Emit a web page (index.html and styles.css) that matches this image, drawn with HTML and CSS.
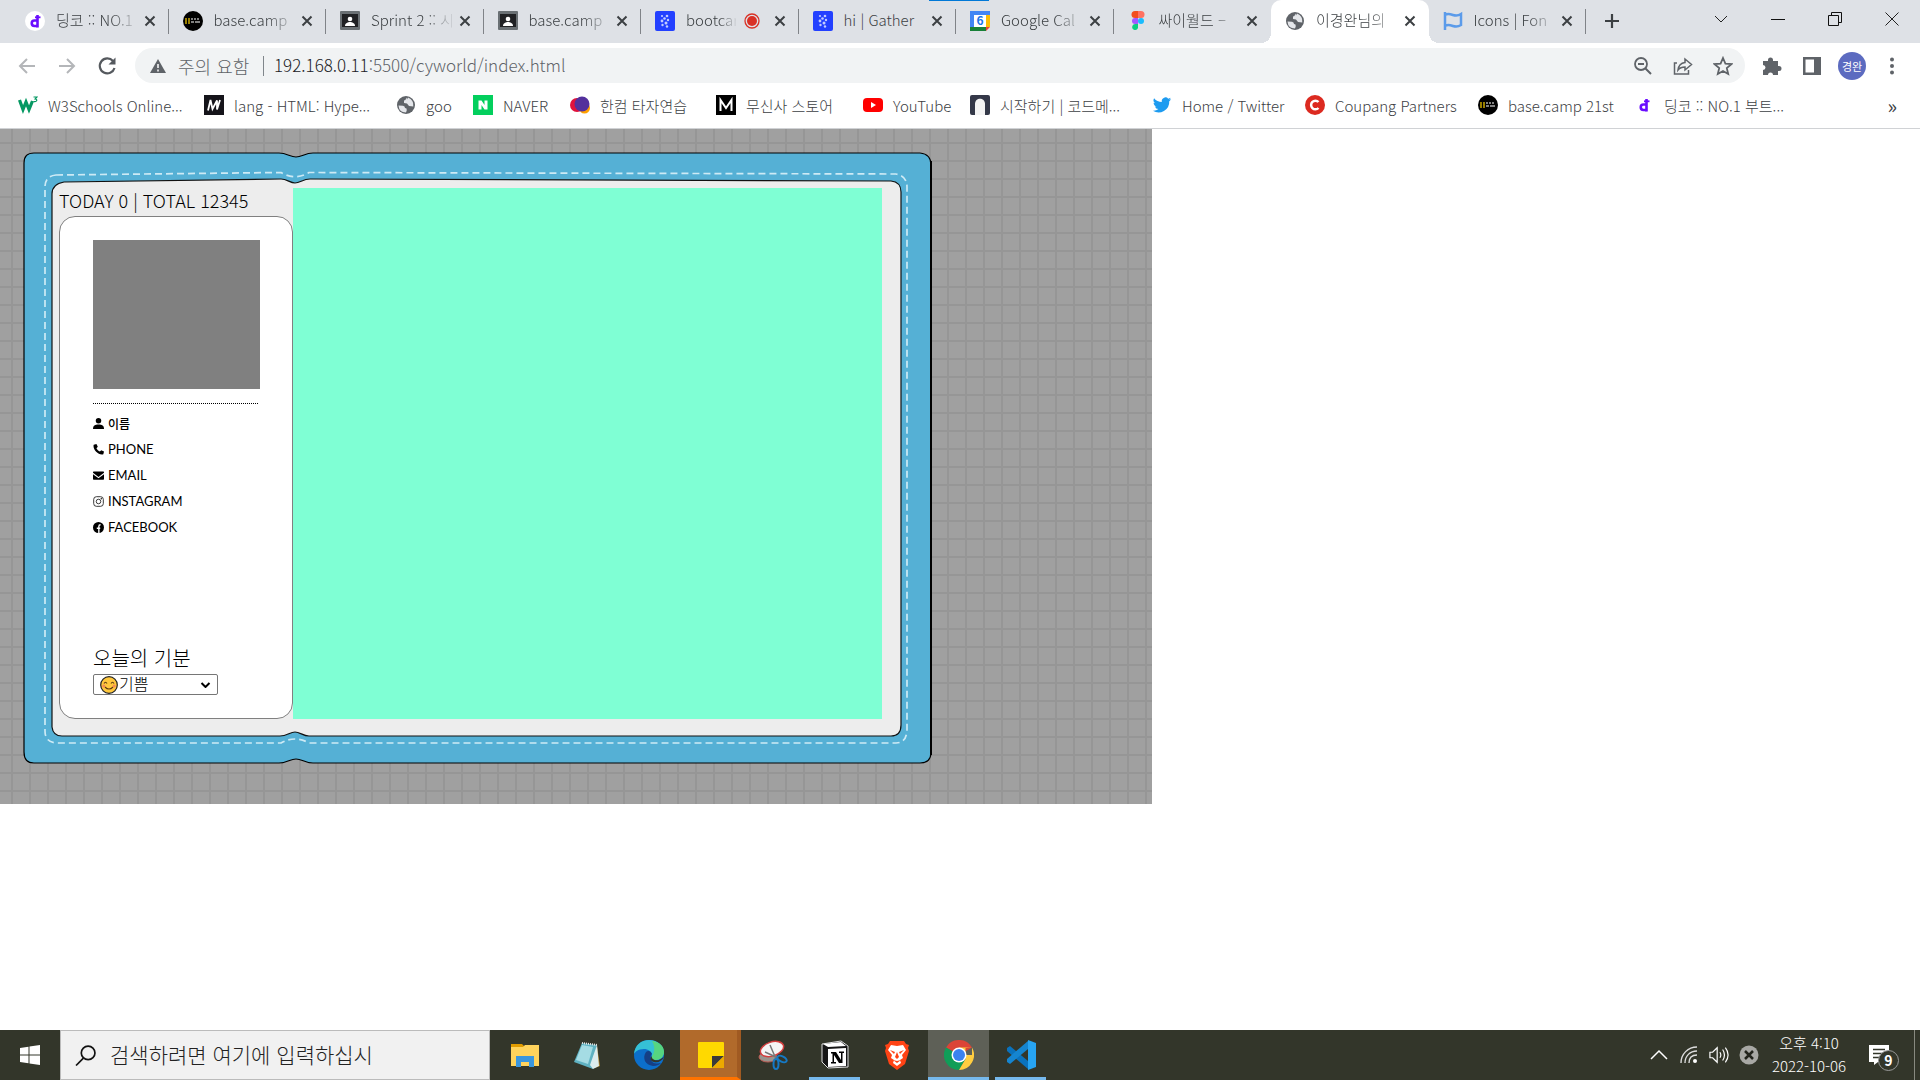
FILE: index.html
```html
<!DOCTYPE html>
<html lang="ko">
<head>
  <meta charset="UTF-8">
  <title>이경완님의 미니홈피</title>
  <link rel="stylesheet" href="styles.css">
</head>
<body>
  <!-- 공용 아이콘 -->
  <svg class="defs" width="0" height="0">
    <symbol id="i-dingco" viewBox="0 0 20 20"><path d="M12.500 4v12.500" stroke="#6a0dff" stroke-width="2.600"/><path d="M12.500 9.500H9.500a2.700 2.700 0 0 0 0 5.500h3" fill="none" stroke="#6a0dff" stroke-width="2.600"/><path d="M10 6.300h5.500" stroke="#6a0dff" stroke-width="1.800"/></symbol>
    <symbol id="i-camp" viewBox="0 0 20 20"><circle cx="10" cy="10" r="10" fill="#000"/><path d="M3 7v6M6 7v6" stroke="#c9a800" stroke-width="1.500"/><path d="M8 8h2M11 8h2M14 8h2M8 11h3M12 11h5" stroke="#aaa" stroke-width="1.500"/></symbol>
    <symbol id="i-class" viewBox="0 0 20 20"><rect width="20" height="19" rx="1" fill="#6a7074"/><rect x="2" y="3" width="16" height="13" fill="#202124"/><circle cx="10" cy="8" r="2.300" fill="#fff"/><path d="M5 15c0-3 3-4 5-4s5 1 5 4z" fill="#fff"/></symbol>
    <symbol id="i-gather" viewBox="0 0 20 20"><rect width="20" height="20" rx="2" fill="#2340ff"/><g fill="#c3ccff"><circle cx="7" cy="5" r="1.100"/><circle cx="12" cy="5" r="1.300"/><circle cx="9.500" cy="7.500" r="1.300"/><circle cx="13" cy="9" r="1.200"/><circle cx="7" cy="10" r="1.400"/><circle cx="11" cy="12" r="1.500"/><circle cx="7.500" cy="14" r="1.200"/><circle cx="12" cy="15.500" r="1.200"/></g></symbol>
    <symbol id="i-globe" viewBox="0 0 20 20"><circle cx="10" cy="10" r="9" fill="#5f6368"/><path d="M2.500 10.500l4.500.3q2 .3 2 2.200l1.500.5q.8 1.500-.5 4Q3 17.500 2.500 10.500zM10.500 2.500q-.5 2.500-2.500 3L8 8l3 .5 2 2.500 4.300.5Q18 5 12 2.600l-1 2z" fill="#e4e6ea"/></symbol>
    <symbol id="i-x" viewBox="0 0 12 12"><path d="M1.500 1.500l9 9M10.500 1.500l-9 9" stroke="#3c4043" stroke-width="2"/></symbol>
  </svg>

  <header class="browser">
    <div class="tabbar">
      <nav class="tabs">
        <div class="tab"><svg class="fav" viewBox="0 0 20 20"><circle cx="10" cy="10" r="10" fill="#fff"/><use href="#i-dingco"/></svg><a href="#">딩코 :: NO.1</a><button aria-label="닫기"><svg><use href="#i-x"/></svg></button></div>
        <div class="tab"><svg class="fav"><use href="#i-camp"/></svg><a href="#">base.camp</a><button aria-label="닫기"><svg><use href="#i-x"/></svg></button></div>
        <div class="tab"><svg class="fav"><use href="#i-class"/></svg><a href="#">Sprint 2 :: 시</a><button aria-label="닫기"><svg><use href="#i-x"/></svg></button></div>
        <div class="tab"><svg class="fav"><use href="#i-class"/></svg><a href="#">base.camp</a><button aria-label="닫기"><svg><use href="#i-x"/></svg></button></div>
        <div class="tab"><svg class="fav"><use href="#i-gather"/></svg><a href="#">bootcar</a><svg class="rec" viewBox="0 0 16 16"><circle cx="8" cy="8" r="7" fill="none" stroke="#d93025" stroke-width="1.300"/><circle cx="8" cy="8" r="5" fill="#d93025"/></svg><button aria-label="닫기"><svg><use href="#i-x"/></svg></button></div>
        <div class="tab"><svg class="fav"><use href="#i-gather"/></svg><a class="whole" href="#">hi | Gather</a><button aria-label="닫기"><svg><use href="#i-x"/></svg></button></div>
        <div class="tab"><svg class="fav" viewBox="0 0 20 20"><path d="M0 0h20v4H0z" fill="#4285f4"/><path d="M0 4h4v12H0z" fill="#4285f4"/><path d="M16 4h4v12h-4z" fill="#fbbc04"/><path d="M0 16h16v4H0z" fill="#188038"/><path d="M16 16h4l-4 4z" fill="#ea4335"/><path d="M4 4h12v12H4z" fill="#fff"/><text x="10" y="14" text-anchor="middle" font-size="12" font-weight="700" fill="#1a73e8">6</text></svg><a href="#">Google Cal</a><button aria-label="닫기"><svg><use href="#i-x"/></svg></button></div>
        <div class="tab no-line"><svg class="fav" viewBox="0 0 20 20"><path d="M7 0h3v7H7a3.500 3.500 0 0 1 0-7z" fill="#f24e1e"/><path d="M10 0h3a3.500 3.500 0 0 1 0 7h-3z" fill="#ff7262"/><path d="M7 7h3v6H7a3 3 0 0 1 0-6z" fill="#a259ff"/><circle cx="13" cy="10" r="3" fill="#1abcfe"/><path d="M7 13h3v4a3 3 0 1 1-3-4z" fill="#0acf83"/></svg><a href="#">싸이월드 –</a><button aria-label="닫기"><svg><use href="#i-x"/></svg></button></div>
        <div class="tab active"><svg class="fav"><use href="#i-globe"/></svg><a href="#">이경완님의</a><button aria-label="닫기"><svg><use href="#i-x"/></svg></button></div>
        <div class="tab"><svg class="fav" viewBox="0 0 20 20"><path d="M2 1v18M2 4c3-2 5-1 8 0s5 1 8-1v11c-3 2-5 2-8 1s-5-2-8 0" fill="none" stroke="#5b9bea" stroke-width="2.500"/></svg><a href="#">Icons | Fon</a><button aria-label="닫기"><svg><use href="#i-x"/></svg></button></div>
      </nav>
      <button class="new-tab" aria-label="새 탭"><svg viewBox="0 0 16 16"><path d="M8 1v14M1 8h14" stroke="#3c4043" stroke-width="2.200"/></svg></button>
      <div class="win">
        <button aria-label="탭 검색"><svg viewBox="0 0 14 14"><path d="M1 4l6 6 6-6" fill="none" stroke="#222"/></svg></button>
        <button aria-label="최소화"><svg viewBox="0 0 14 14"><path d="M0 7.500h14" stroke="#111"/></svg></button>
        <button aria-label="복원"><svg viewBox="0 0 14 14"><path d="M.5 3.500h10v10H.5zM3.500 3V.5h10v10H11" fill="none" stroke="#111"/></svg></button>
        <button aria-label="창 닫기"><svg viewBox="0 0 14 14"><path d="M.5.5l13 13M13.500.5l-13 13" stroke="#222"/></svg></button>
      </div>
      <div class="drag-hint"></div>
    </div>

    <div class="toolbar">
      <button aria-label="뒤로"><svg viewBox="0 0 20 20"><path d="M18 10H3M10 3l-7 7 7 7" fill="none" stroke="#b4b6b9" stroke-width="2"/></svg></button>
      <button aria-label="앞으로"><svg viewBox="0 0 20 20"><path d="M2 10h15M10 3l7 7-7 7" fill="none" stroke="#b4b6b9" stroke-width="2"/></svg></button>
      <button aria-label="새로고침"><svg viewBox="0 0 20 20"><path d="M16 5a7.500 7.500 0 1 0 1.500 7" fill="none" stroke="#55595e" stroke-width="2.200"/><path d="M18.500 1.500v7h-7z" fill="#55595e"/></svg></button>
      <div class="address">
        <svg class="warn" viewBox="0 0 16 16"><path d="M8 1l8 14H0z" fill="#5f6368"/><path d="M8 6v4M8 11.500v2" stroke="#fff" stroke-width="1.500"/></svg>
        <span class="secure">주의 요함</span>
        <p class="url"><b>192.168.0.11</b>:5500/cyworld/index.html</p>
        <button aria-label="축소"><svg viewBox="0 0 20 20"><circle cx="8" cy="8" r="6" fill="none" stroke="#5f6368" stroke-width="1.800"/><path d="M12.500 12.500L18 18M5 8h6" stroke="#5f6368" stroke-width="2"/></svg></button>
        <button aria-label="공유"><svg viewBox="0 0 20 20"><path d="M4 7H1.500v11h14v-4M12 3l6.500 5.500L12 14v-3c-3 0-5 .5-7 3 .5-4 3-7 7-7.500z" fill="none" stroke="#5f6368" stroke-width="1.500"/></svg></button>
        <button aria-label="북마크"><svg viewBox="0 0 20 20"><path d="M10 2l2.400 5.600 6 .5-4.600 4 1.400 5.900L10 15l-5.200 3 1.400-5.900-4.600-4 6-.5z" fill="none" stroke="#5f6368" stroke-width="1.800"/></svg></button>
      </div>
      <button aria-label="확장 프로그램"><svg viewBox="0 0 20 20"><path d="M1 5h5V4a2.500 2.500 0 0 1 5 0v1h5v5h1a2.500 2.500 0 0 1 0 5h-1v4h-5a2.500 2.500 0 0 0-5 0H1v-5a2.500 2.500 0 0 0 0-5z" fill="#5f6368"/></svg></button>
      <button aria-label="측면 패널"><svg viewBox="0 0 20 20"><path d="M1 1h18v18H1zM3.500 3.500v13H12v-13z" fill="#5f6368" fill-rule="evenodd"/></svg></button>
      <button class="avatar">경완</button>
      <button aria-label="메뉴"><svg viewBox="0 0 20 20"><g fill="#5f6368"><circle cx="10" cy="3.500" r="2"/><circle cx="10" cy="10" r="2"/><circle cx="10" cy="16.500" r="2"/></g></svg></button>
    </div>

    <nav class="bookmarks">
      <a href="#"><svg class="fav" viewBox="0 0 20 20"><path d="M1.500 5L5 14.500 8 7l3 7.500L14.500 6" fill="none" stroke="#059862" stroke-width="3.200"/><path d="M15.500 2h3.500l-1.800 2c2.500 0 2 3.500-1.700 2.500" fill="none" stroke="#059862" stroke-width="1.200"/></svg>W3Schools Online...</a>
      <a href="#"><svg class="fav" viewBox="0 0 20 20"><path d="M0 0h20v20H0z" fill="#15141a"/><path d="M4 15.500L6.500 5l2 9L13 5.500v9L16 5" fill="none" stroke="#fff" stroke-width="1.800"/></svg>lang - HTML: Hype...</a>
      <a href="#"><svg class="fav"><use href="#i-globe"/></svg>goo</a>
      <a href="#"><svg class="fav" viewBox="0 0 20 20"><path d="M0 0h20v20H0z" fill="#03cf5d"/><path d="M5.500 5.500h3l3 4.500V5.500h3v9h-3l-3-4.500v4.500h-3z" fill="#fff"/></svg>NAVER</a>
      <a href="#"><svg class="fav" viewBox="0 0 20 20"><circle cx="7" cy="10" r="7" fill="#e0123c"/><circle cx="14.500" cy="13" r="5.500" fill="#ffa000"/><circle cx="12" cy="9" r="7.500" fill="#53309c"/></svg>한컴 타자연습</a>
      <a href="#"><svg class="fav" viewBox="0 0 20 20"><path d="M0 0h20v20H0z"/><path d="M4.500 16V5l5.500 8 5.500-8v11" fill="none" stroke="#fff" stroke-width="2"/></svg>무신사 스토어</a>
      <a href="#"><svg class="fav" viewBox="0 0 20 20"><rect y="3" width="20" height="14" rx="4" fill="#f00"/><path d="M8 7l5 3-5 3z" fill="#fff"/></svg>YouTube</a>
      <a href="#"><svg class="fav" viewBox="0 0 20 20"><rect width="20" height="20" rx="2" fill="#343848"/><path d="M5 20V9c0-7 10-7 10 0v11z" fill="#f4f4f4"/></svg>시작하기 | 코드메...</a>
      <a href="#"><svg class="fav" viewBox="0 0 24 24"><path d="M23 5.100a9 9 0 0 1-2.600.7 4.500 4.500 0 0 0 2-2.500 9 9 0 0 1-2.900 1.100 4.500 4.500 0 0 0-7.700 4.100A12.800 12.800 0 0 1 2.500 3.800a4.500 4.500 0 0 0 1.400 6 4.500 4.500 0 0 1-2-.6c0 2.200 1.500 4.100 3.600 4.500a4.500 4.500 0 0 1-2 .1 4.500 4.500 0 0 0 4.200 3.100A9 9 0 0 1 1 18.800 12.800 12.800 0 0 0 20.700 7.400 9 9 0 0 0 23 5.100z" fill="#1d9bf0"/></svg>Home / Twitter</a>
      <a href="#"><svg class="fav" viewBox="0 0 20 20"><circle cx="10" cy="10" r="10" fill="#dc2a20"/><path d="M13.500 7a4.300 4.300 0 1 0 0 6" fill="none" stroke="#fff" stroke-width="2.500"/></svg>Coupang Partners</a>
      <a href="#"><svg class="fav"><use href="#i-camp"/></svg>base.camp 21st</a>
      <a href="#"><svg class="fav"><use href="#i-dingco"/></svg>딩코 :: NO.1 부트...</a>
      <a class="more" href="#">»</a>
    </nav>
  </header>

  <main>
    <div class="wallpaper">
      <div class="book">
        <svg class="cover" viewBox="0 0 910 612" preserveAspectRatio="none">
          <path d="M11 1H256C264 1 267 5 273 5S282 1 290 1H897Q908 2 908 13V600Q908 611 897 611H290C282 611 279 607 273 607S264 611 256 611H11Q1 611 1 600V11Q1 1 11 1z" fill="#55b0d5" stroke="#000" stroke-width="1.200"/>
          <path d="M908 9V603" stroke="#000" stroke-width="2"/>
          <path d="M41 30L258 27C264 27 267 31 272 31S280 27 287 27L868 29Q878 30 878 40V573Q878 584 868 584H286C280 584 277 580 272 580S264 584 257 584H39Q30 584 29 575V42Q29 32 41 30z" fill="#ededed" stroke="#111" stroke-width="1.200"/>
          <path d="M33 23L258 20.500Q272 29 286 20.500L873 22Q884 24 884 35V579Q883 591 873 591H286Q272 583 258 591H33Q22 590 22 579V35Q22 24 33 23z" fill="none" stroke="#cdeaf5" stroke-width="1.700" stroke-dasharray="7 4"/>
        </svg>
        <div class="left">
          <p class="count">TODAY 0 | TOTAL 12345</p>
          <section class="profile">
            <div class="photo"></div>
            <ul class="info">
              <li class="name"><svg viewBox="0 0 16 16"><circle cx="8" cy="4" r="4"/><path d="M0 16c0-5 3-6.500 8-6.500s8 1.500 8 6.500z"/></svg>이름</li>
              <li><svg viewBox="0 0 16 16"><path d="M5 0L1 1C-1 8 8 17 15 15l1-4-4-2-2 2C8 10 6 8 5 6l2-2z"/></svg>PHONE</li>
              <li><svg viewBox="0 0 16 16"><path d="M0 3q0-1 1-1h14q1 0 1 1v1L8 10 0 4zM0 6l8 6 8-6v7q0 1-1 1H1q-1 0-1-1z"/></svg>EMAIL</li>
              <li><svg viewBox="0 0 16 16"><rect x="1" y="1" width="14" height="14" rx="4" fill="none" stroke="#222" stroke-width="1.300"/><circle cx="8" cy="8" r="3.300" fill="none" stroke="#222" stroke-width="1.300"/><circle cx="12" cy="4" r="1"/></svg>INSTAGRAM</li>
              <li><svg viewBox="0 0 16 16"><circle cx="8" cy="8" r="8"/><path d="M8.500 16V6q0-2 2.500-2M5.500 9h5" stroke="#fff" stroke-width="2" fill="none"/></svg>FACEBOOK</li>
            </ul>
            <div class="feel">
              <label for="feel">오늘의 기분</label>
              <div class="pick">
                <select id="feel"><option>기쁨</option></select>
                <svg class="face" viewBox="0 0 18 18"><circle cx="9" cy="9" r="8.300" fill="#ffc83d" stroke="#222" stroke-width="1.200"/><path d="M4 7.500q1.500-2.500 3 0M11 7.500q1.500-2.500 3 0M5 11q4 4 8 0" fill="none" stroke="#5c3a14" stroke-width="1.100"/><circle cx="3.800" cy="10" r="1.500" fill="#f58a56"/><circle cx="14.200" cy="10" r="1.500" fill="#f58a56"/></svg>
                <svg class="arrow" viewBox="0 0 10 6"><path d="M1 1l4 4 4-4" fill="none" stroke="#000" stroke-width="2"/></svg>
              </div>
            </div>
          </section>
        </div>
        <div class="right"></div>
      </div>
    </div>
  </main>

  <footer class="taskbar">
    <button class="start" aria-label="시작"><svg viewBox="0 0 20 20"><path d="M0 3l8.500-1.200v7.700H0zM9.500 1.600L20 0v9.500H9.500zM0 10.500h8.500v7.700L0 17zM9.500 10.500H20V20L9.500 18.400z" fill="#fff"/></svg></button>
    <div class="search">
      <svg viewBox="0 0 20 20"><circle cx="12.500" cy="7.500" r="6.500" fill="none" stroke="#111" stroke-width="1.600"/><path d="M8 12.500L1 19.500" stroke="#111" stroke-width="1.600"/></svg>
      <input type="text" aria-label="검색" placeholder="검색하려면 여기에 입력하십시">
    </div>
    <div class="apps">
      <button aria-label="파일 탐색기"><svg viewBox="0 0 30 30"><path d="M1 4h11l3 3H1z" fill="#e09b00"/><path d="M1 7h12l2-2h14v21H1z" fill="#ffd35c"/><path d="M6 27V16h18v11h-5v-5h-8v5z" fill="#3a96dd"/></svg></button>
      <button aria-label="메모장"><svg viewBox="0 0 30 30"><path d="M25 6l3 20-5 2z" fill="#b0862e"/><path d="M10 3l15 2-4 24L2 22z" fill="#5fb2c2"/><path d="M10 5l11 2-5 17-12-4z" fill="#a5dce4"/><path d="M25 5l2 21-6 3-3-4z" fill="#dcecee"/><path d="M10 3l15 2" stroke="#e8e8e8" stroke-width="2" stroke-dasharray="1 1"/></svg></button>
      <button aria-label="엣지"><svg viewBox="0 0 30 30"><circle cx="15" cy="15" r="15" fill="#0c6fcb"/><path d="M0 14C1 5 7 0 15 0c9 0 15 6 15 12 0 5-4 8-8 8-4 0-5-2-4-4 0-5-4-7-8-7-6 0-9 3-10 5z" fill="#35c1d6"/><path d="M18 1c8 1 12 6 12 11 0 5-4 8-8 8-4 0-5-2-4-4 3-4 3-10 0-15z" fill="#5fd96a" opacity=".8"/><path d="M12 12c-4 6-1 13 7 14 4 0 7-2 8-3-3 1-11 1-10-5-1-2 0-3 1-4-1-3-4-4-6-2z" fill="#153f86"/><path d="M18 16c-1 3 3 5 7 4l5-3c-2 4-6 6-10 5-4-1-4-4-2-6z" fill="#33362a"/></svg></button>
      <button class="note" aria-label="스티커 메모"><svg viewBox="0 0 30 30"><rect x="2" y="2" width="26" height="26" rx="1" fill="#ffd900"/><path d="M16 28V16h12z" fill="#3a3a3a"/><path d="M16 28l12-12v12z" fill="#eca900"/></svg></button>
      <button aria-label="캡처 도구"><svg viewBox="0 0 30 30"><ellipse cx="10" cy="17" rx="9" ry="5" fill="#99948d" stroke="#bb5a52"/><ellipse cx="14" cy="9" rx="12" ry="7" transform="rotate(-18 14 9)" fill="#f5f5f5" stroke="#d43e3e" stroke-width="1.500"/><path d="M12 5l6 14M7 12l13 6" stroke="#777" stroke-width="1.500"/><ellipse cx="18" cy="24" rx="2.500" ry="5" fill="none" stroke="#1679c4" stroke-width="2"/><ellipse cx="24" cy="19" rx="5" ry="2.700" transform="rotate(25 24 19)" fill="none" stroke="#1679c4" stroke-width="2"/></svg></button>
      <button class="open" aria-label="노션"><svg viewBox="0 0 30 30"><path d="M2 4l19-3 7 5v21L8 28l-6-6z" fill="#161616" stroke="#ddd"/><path d="M3 4l18-2 5 4-18 1z" fill="#fff"/><path d="M8 9l18-1v18L8 27z" fill="#fff"/><path d="M11 12h5l5 8v-7h-2v-1.500h5V13h-1.500v10H19l-5-8v7h2v1.500h-5V22h1.500v-8.500H11z"/></svg></button>
      <button aria-label="브레이브"><svg viewBox="0 0 30 30"><path d="M8 1h14l2 3 3 1-1 3 1 3-4 13-8 6-8-6L3 11l1-3-1-3 3-1z" fill="#ff4315"/><path d="M9 5l6 1 6-1 3 5-4 5 1 3-3 2 1 3-4 3-4-3 1-3-3-2 1-3-4-5z" fill="#fff"/><path d="M8 10l5 2-1 2zM22 10l-5 2 1 2zM13 17l2-5 2 5-2 2zM11 20l4 1 4-1-4 3z" fill="#ff4315"/></svg></button>
      <button class="open current" aria-label="크롬"><svg viewBox="0 0 30 30"><path d="M15 15L2 7.500a15 15 0 0 1 26 0z" fill="#db4437"/><path d="M15 15L2 7.500A15 15 0 0 0 15 30l6.500-11z" fill="#109d58"/><path d="M15 15h13V7.500H15zM28 7.500A15 15 0 0 1 15 30l6.500-11V8z" fill="#ffcd40"/><circle cx="15" cy="15" r="7.500" fill="#fff"/><circle cx="15" cy="15" r="6" fill="#3b82f0"/></svg></button>
      <button class="open" aria-label="VS Code"><svg viewBox="0 0 30 30"><path d="M1 8l3-2 18 15v8L1 11z" fill="#0a72bd"/><path d="M1 22l3 2L22 9V1L1 19z" fill="#1585d0"/><path d="M22 0l8 3v24l-8 3z" fill="#27a4f2"/></svg></button>
    </div>
    <div class="tray">
      <svg viewBox="0 0 20 20"><path d="M2 14l8-8 8 8" fill="none" stroke="#fff" stroke-width="1.500"/></svg>
      <svg viewBox="0 0 20 20"><path d="M2 18C2 9 9 2 18 2M6 18C6 11 11 6 18 6M10 18c0-5 3-8 8-8" fill="none" stroke="#ddd" stroke-width="1.400"/><circle cx="16" cy="16" r="2" fill="#fff"/></svg>
      <svg viewBox="0 0 22 20"><path d="M1 7h3l5-5v16l-5-5H1zM12 7q2 3 0 6M15 4q4 6 0 12M18 2q6 8 0 16" fill="none" stroke="#fff" stroke-width="1.300"/></svg>
      <svg viewBox="0 0 20 20"><circle cx="10" cy="10" r="9.500" fill="#a8a8a4"/><path d="M6 6l8 8M14 6l-8 8" stroke="#22241c" stroke-width="2.500"/></svg>
      <p class="clock">오후 4:10<br>2022-10-06</p>
      <div class="notice"><svg viewBox="0 0 20 20"><path d="M0 0h20v17H9l-4 3v-3H0z" fill="#fff"/><path d="M4 4.500h12M4 8.500h12M4 12.500h8" stroke="#33362a" stroke-width="1.300"/></svg><span>9</span></div>
    </div>
  </footer>
</body>
</html>
```
FILE: styles.css
```css
* {
  box-sizing: border-box;
}
body {
  margin: 0;
  min-height: 100vh;
  display: flex;
  flex-direction: column;
  background: #fff;
  color: #000;
  font-family: "Noto Sans CJK KR", "Noto Sans", sans-serif;
  font-weight: 300;
}
.defs {
  position: absolute;
}
p, ul {
  margin: 0;
  padding: 0;
}
a {
  color: #3c4043;
  text-decoration: none;
}
button {
  display: flex;
  align-items: center;
  justify-content: center;
  padding: 0;
  border: none;
  background: none;
  font-family: inherit;
}
svg {
  flex: none;
}
.fav {
  width: 20px;
  height: 20px;
}

/* ========== Tabs ========== */
.tabbar {
  position: relative;
  display: flex;
  height: 43px;
  padding-left: 11px;
  background: #dee1e6;
}
.tabs {
  display: flex;
  flex: none;
  width: 1575px;
  max-width: 83%;
}
.tab {
  position: relative;
  flex: 1;
  min-width: 0;
  display: flex;
  align-items: center;
  padding: 0 13px 2px 14px;
  font-size: 15px;
}
.tab::after {
  content: "";
  position: absolute;
  right: 0;
  top: 9px;
  width: 1px;
  height: 25px;
  background: #808388;
}
.tab.no-line::after, .tab.active::after {
  display: none;
}
.tab.active {
  background: #fff;
  border-radius: 10px 10px 0 0;
}
.tab.active::before {
  content: "";
  position: absolute;
  left: -10px;
  right: -10px;
  bottom: 0;
  height: 10px;
  background: radial-gradient(circle at 0 0, transparent 10px, #fff 10px) left / 10px 10px no-repeat,
    radial-gradient(circle at 100% 0, transparent 10px, #fff 10px) right / 10px 10px no-repeat;
}
.tab a {
  flex: 1;
  min-width: 0;
  margin-left: 11px;
  padding-bottom: 2px;
  white-space: nowrap;
  -webkit-mask-image: linear-gradient(to right, #000 65%, rgba(0,0,0,0.1));
  mask-image: linear-gradient(to right, #000 65%, rgba(0,0,0,0.1));
}
.tab a.whole {
  -webkit-mask-image: none;
  mask-image: none;
}
.tab button {
  width: 12px;
  margin-left: 6px;
}
.tab button svg {
  width: 12px;
  height: 12px;
}
.rec {
  width: 16px;
  height: 16px;
  margin: 0 8px;
}
.new-tab {
  width: 52px;
  padding-bottom: 2px;
}
.new-tab svg {
  width: 16px;
  height: 16px;
}
.win {
  display: flex;
  margin-left: auto;
}
.win button {
  width: 57px;
  height: 37px;
}
.win svg {
  width: 14px;
  height: 14px;
}
.drag-hint {
  position: absolute;
  top: 0;
  left: 929px;
  width: 60px;
  height: 1px;
  background: #0078d7;
}

/* ========== Toolbar ========== */
.toolbar {
  display: flex;
  align-items: center;
  height: 45px;
  padding: 0 8px 0 7px;
}
.toolbar button {
  width: 40px;
  height: 34px;
}
.toolbar svg {
  width: 20px;
  height: 20px;
}
.address {
  flex: 1;
  display: flex;
  align-items: center;
  height: 35px;
  margin: 0 7px 0 8px;
  padding: 0 2px 0 15px;
  border-radius: 18px;
  background: #f1f3f4;
  color: #5f6368;
  font-size: 18px;
}
.address .warn {
  width: 16px;
  height: 16px;
}
.secure {
  width: 86px;
  margin-left: 12px;
  border-right: 1px solid #80868b;
  line-height: 20px;
}
.url {
  flex: 1;
  margin-left: 10px;
  padding-bottom: 2px;
  font-size: 17px;
}
.url b {
  color: #202124;
  font-weight: 300;
}
.toolbar .avatar {
  width: 28px;
  height: 28px;
  margin: 0 6px;
  border-radius: 50%;
  background: #5c6bc0;
  color: #fff;
  font-size: 11px;
}

/* ========== Bookmarks ========== */
.bookmarks {
  display: grid;
  grid-template-columns: 186px 192px 77px 97px 146px 147px 107px 182px 153px 173px 156px 200px 1fr;
  align-items: center;
  height: 41px;
  padding: 0 23px 6px 18px;
  border-bottom: 1px solid #d0d2d5;
}
.bookmarks a {
  display: flex;
  align-items: center;
  gap: 10px;
  font-size: 15px;
  white-space: nowrap;
}
.bookmarks .more {
  justify-content: flex-end;
  font-size: 20px;
  font-weight: 400;
}

/* ========== Cyworld ========== */
main {
  flex: 1;
}
.wallpaper {
  width: 60%;
  padding: 23px 0 40px 23px;
  background-color: #a0a0a0;
  background-image: linear-gradient(#969696 2px, transparent 2px), linear-gradient(to right, #969696 2px, transparent 2px);
  background-size: 18px 18px;
  background-position: 11px 13px;
}
.book {
  position: relative;
  display: flex;
  width: 910px;
  max-width: 100%;
  padding: 36px 51px 45px 36px;
}
.cover {
  position: absolute;
  left: 0;
  top: 0;
  width: 100%;
  height: 100%;
}
.left {
  position: relative;
  width: 234px;
}
.count {
  height: 28px;
  font-size: 18px;
  line-height: 25px;
}
.profile {
  display: flex;
  flex-direction: column;
  min-height: 503px;
  padding: 23px 32px 23px 33px;
  border: 1px solid gray;
  border-radius: 16px;
  background: #fff;
}
.photo {
  height: 149px;
  background: gray;
}
.info {
  margin: 14px 2px 0 0;
  padding-top: 6px;
  border-top: 1px dotted #000;
  list-style: none;
  font-family: Lato, "Noto Sans CJK KR", sans-serif;
  font-weight: 400;
  font-size: 13px;
}
.info li {
  display: flex;
  align-items: center;
  gap: 4px;
  height: 26px;
}
.info .name {
  font-size: 12px;
  font-weight: 500;
}
.info svg {
  width: 11px;
  height: 11px;
}
.feel {
  margin-top: auto;
}
.feel label {
  display: block;
  font-size: 20px;
  line-height: 32px;
}
.pick {
  position: relative;
  width: 125px;
}
.pick select {
  display: block;
  width: 100%;
  height: 21px;
  padding: 0 0 2px 25px;
  border: 1px solid #767676;
  border-radius: 2px;
  background: #fff;
  color: #000;
  appearance: none;
  font-family: inherit;
  font-weight: 300;
  font-size: 16px;
  line-height: 17px;
}
.face {
  position: absolute;
  left: 7px;
  top: 2px;
  width: 18px;
  height: 18px;
}
.arrow {
  position: absolute;
  right: 7px;
  top: 8px;
  width: 11px;
  height: 6px;
}
.right {
  position: relative;
  flex: 1;
  background: aquamarine;
}

/* ========== Taskbar ========== */
.taskbar {
  display: flex;
  height: 50px;
  background: #33362a;
  color: #fff;
}
.start {
  width: 60px;
}
.start svg {
  width: 20px;
  height: 20px;
}
.search {
  display: flex;
  align-items: center;
  width: 430px;
  padding: 0 14px;
  border: 1px solid #bbb;
  background: #f1f1f1;
}
.search svg {
  width: 21px;
  height: 21px;
}
.search input {
  flex: 1;
  min-width: 0;
  margin-left: 14px;
  padding: 0 0 2px;
  border: none;
  background: none;
  font-family: inherit;
  font-weight: 300;
  font-size: 21px;
}
.search input::placeholder {
  color: #222;
}
.apps {
  display: flex;
  gap: 1px;
  margin-left: 4px;
}
.apps button {
  position: relative;
  width: 61px;
}
.apps svg {
  width: 30px;
  height: 30px;
}
.apps .note {
  background: #b16a2b;
  border-bottom: 3px solid #ff7300;
  border-right: 4px solid #a05a22;
  padding: 3px 0 0 4px;
}
.apps .current {
  background: #5e6057;
}
.open::after {
  content: "";
  position: absolute;
  left: 5px;
  right: 5px;
  bottom: 0;
  height: 3px;
  background: #76b9ed;
}
.current::after {
  left: 0;
  right: 0;
}
.tray {
  display: flex;
  align-items: center;
  gap: 10px;
  margin-left: auto;
  margin-right: 5px;
  padding-right: 15px;
  border-right: 1px solid #888a80;
}
.tray svg {
  width: 20px;
  height: 20px;
}
.clock {
  width: 80px;
  padding-bottom: 2px;
  font-size: 15px;
  line-height: 23px;
  text-align: center;
  white-space: nowrap;
}
.notice {
  position: relative;
  width: 30px;
  height: 20px;
  margin-left: 10px;
}
.notice span {
  position: absolute;
  left: 9px;
  top: 5px;
  width: 21px;
  height: 21px;
  border: 1px solid #999;
  border-radius: 50%;
  background: #33362a;
  font-size: 14px;
  font-weight: 700;
  line-height: 18px;
  text-align: center;
}
```
